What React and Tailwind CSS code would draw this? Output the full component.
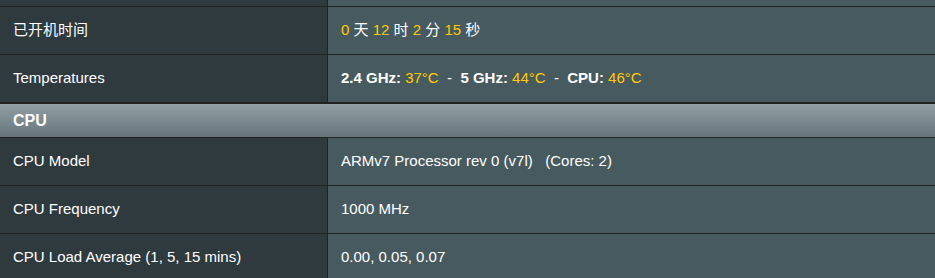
import React from "react";

const font = { fontFamily: '"Liberation Sans", Arial, "Noto Sans CJK SC", sans-serif' };

const Row = ({ label, children }) => (
  <div className="grid grid-cols-[327px_607px] gap-x-px h-[47px] shrink-0">
    <div className="bg-[#2f3a3f] flex items-center pl-[13px] text-white text-[15px]">
      <span>{label}</span>
    </div>
    <div className="bg-[#475a5f] flex items-center pl-[13px] text-white text-[15px]">
      <span className="whitespace-pre">{children}</span>
    </div>
  </div>
);

const Y = ({ children }) => <span className="text-[#ffcc00]">{children}</span>;

export default function App() {
  return (
    <div
      className="w-[935px] h-[278px] overflow-hidden bg-[#222] flex flex-col gap-y-px"
      style={font}
    >
      {/* tail of the previous row */}
      <div className="grid grid-cols-[327px_607px] gap-x-px h-[6px] shrink-0">
        <div className="bg-[#2f3a3f]" />
        <div className="bg-[#475a5f]" />
      </div>

      <Row label="已开机时间">
        <Y>0</Y> 天 <Y>12</Y> 时 <Y>2</Y> 分 <Y>15</Y> 秒
      </Row>
      <Row label="Temperatures">
        <b>2.4 GHz:</b> <Y>37°C</Y>{"  -  "}<b>5 GHz:</b> <Y>44°C</Y>
        {"  -  "}
        <b>CPU:</b> <Y>46°C</Y>
      </Row>

      <div className="mt-px h-[33px] shrink-0 bg-gradient-to-b from-[#92a0a5] to-[#66757c] flex items-center pl-[13px] text-white font-bold text-[16px]">
        CPU
      </div>

      <Row label="CPU Model">ARMv7 Processor rev 0 (v7l)   (Cores: 2)</Row>
      <Row label="CPU Frequency">1000 MHz</Row>
      <Row label="CPU Load Average (1, 5, 15 mins)">0.00, 0.05, 0.07</Row>
    </div>
  );
}
